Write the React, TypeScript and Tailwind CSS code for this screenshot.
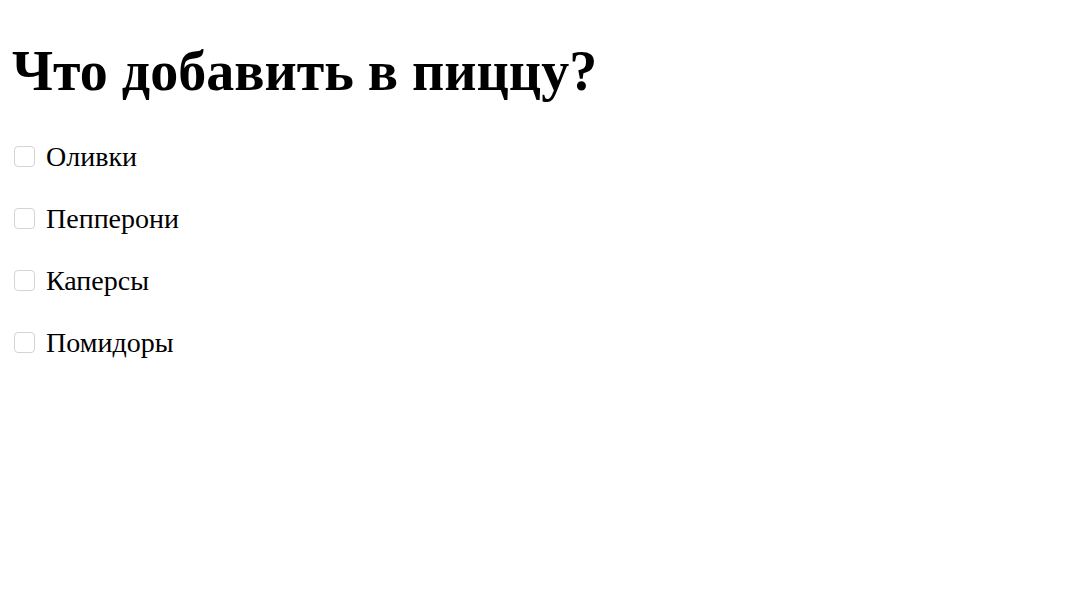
import React, { useState } from 'react';

const toppings = ['Оливки', 'Пепперони', 'Каперсы', 'Помидоры'];

export default function App() {
  const [checked, setChecked] = useState<Record<string, boolean>>({});

  return (
    <div className="min-h-screen bg-white px-3 text-black" style={{ fontFamily: '"Liberation Serif", "Times New Roman", serif' }}>
      <h1 className="pt-[39px] text-[56px] font-bold leading-[64px]">Что добавить в пиццу?</h1>
      <div className="mt-[38px] flex flex-col gap-[31px]">
        {toppings.map(t => (
          <label key={t} className="flex items-center gap-[11px] text-[28px] leading-[31px]">
            <input
              type="checkbox"
              checked={!!checked[t]}
              onChange={() => setChecked(prev => ({ ...prev, [t]: !prev[t] }))}
              className="ml-[2px] h-[21px] w-[21px] appearance-none rounded-[4px] border border-[#d4d4d4] bg-white checked:bg-blue-600"
            />
            {t}
          </label>
        ))}
      </div>
    </div>
  );
}
